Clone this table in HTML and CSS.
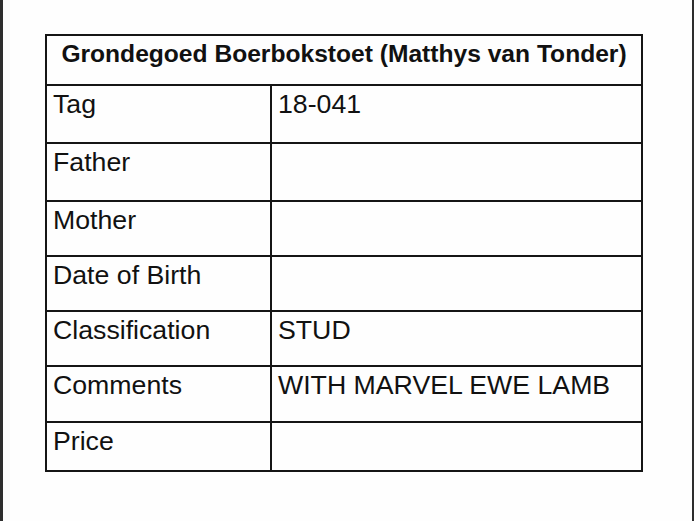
FILE: index.html
```html
<!DOCTYPE html>
<html>
<head>
<meta charset="utf-8">
<link rel="stylesheet" href="styles.css">
</head>
<body>
<div class="viewer">
  <div class="edge edge-left"></div>
  <main class="page">
    <div class="sheet">
      <div class="cell head">Grondegoed Boerbokstoet (Matthys van Tonder)</div>
      <div class="cell">Tag</div><div class="cell">18-041</div>
      <div class="cell">Father</div><div class="cell"></div>
      <div class="cell">Mother</div><div class="cell"></div>
      <div class="cell">Date of Birth</div><div class="cell"></div>
      <div class="cell">Classification</div><div class="cell">STUD</div>
      <div class="cell">Comments</div><div class="cell">WITH MARVEL EWE LAMB</div>
      <div class="cell">Price</div><div class="cell"></div>
    </div>
  </main>
  <div class="edge edge-right"></div>
</div>
</body>
</html>
```
FILE: styles.css
```css
html, body {
  margin: 0;
  padding: 0;
  background: #fff;
}
.viewer {
  display: flex;
  width: 694px;
  height: 521px;
}
.edge {
  background: #2e2e2e;
  flex: none;
}
.edge-left { width: 3px; }
.edge-right { width: 2px; }
.page {
  flex: 1;
  background: #fefefe;
  padding: 34px 0 0 42px;
}
.sheet {
  display: grid;
  width: 598px;
  box-sizing: border-box;
  grid-template-columns: 223px 369px;
  grid-template-rows: 48px 56px 56px 53px 53px 53px 54px 47px;
  gap: 2px;
  padding: 2px;
  background: #151515;
  font-family: "Liberation Sans", Arial, sans-serif;
  color: #111;
}
.cell {
  background: #fefefe;
  font-size: 26.7px;
  line-height: 30px;
  padding: 3px 6px;
}
.head {
  grid-column: 1 / 3;
  text-align: center;
  font-weight: bold;
  font-size: 24.6px;
  line-height: 28px;
  padding-top: 4px;
}
```
